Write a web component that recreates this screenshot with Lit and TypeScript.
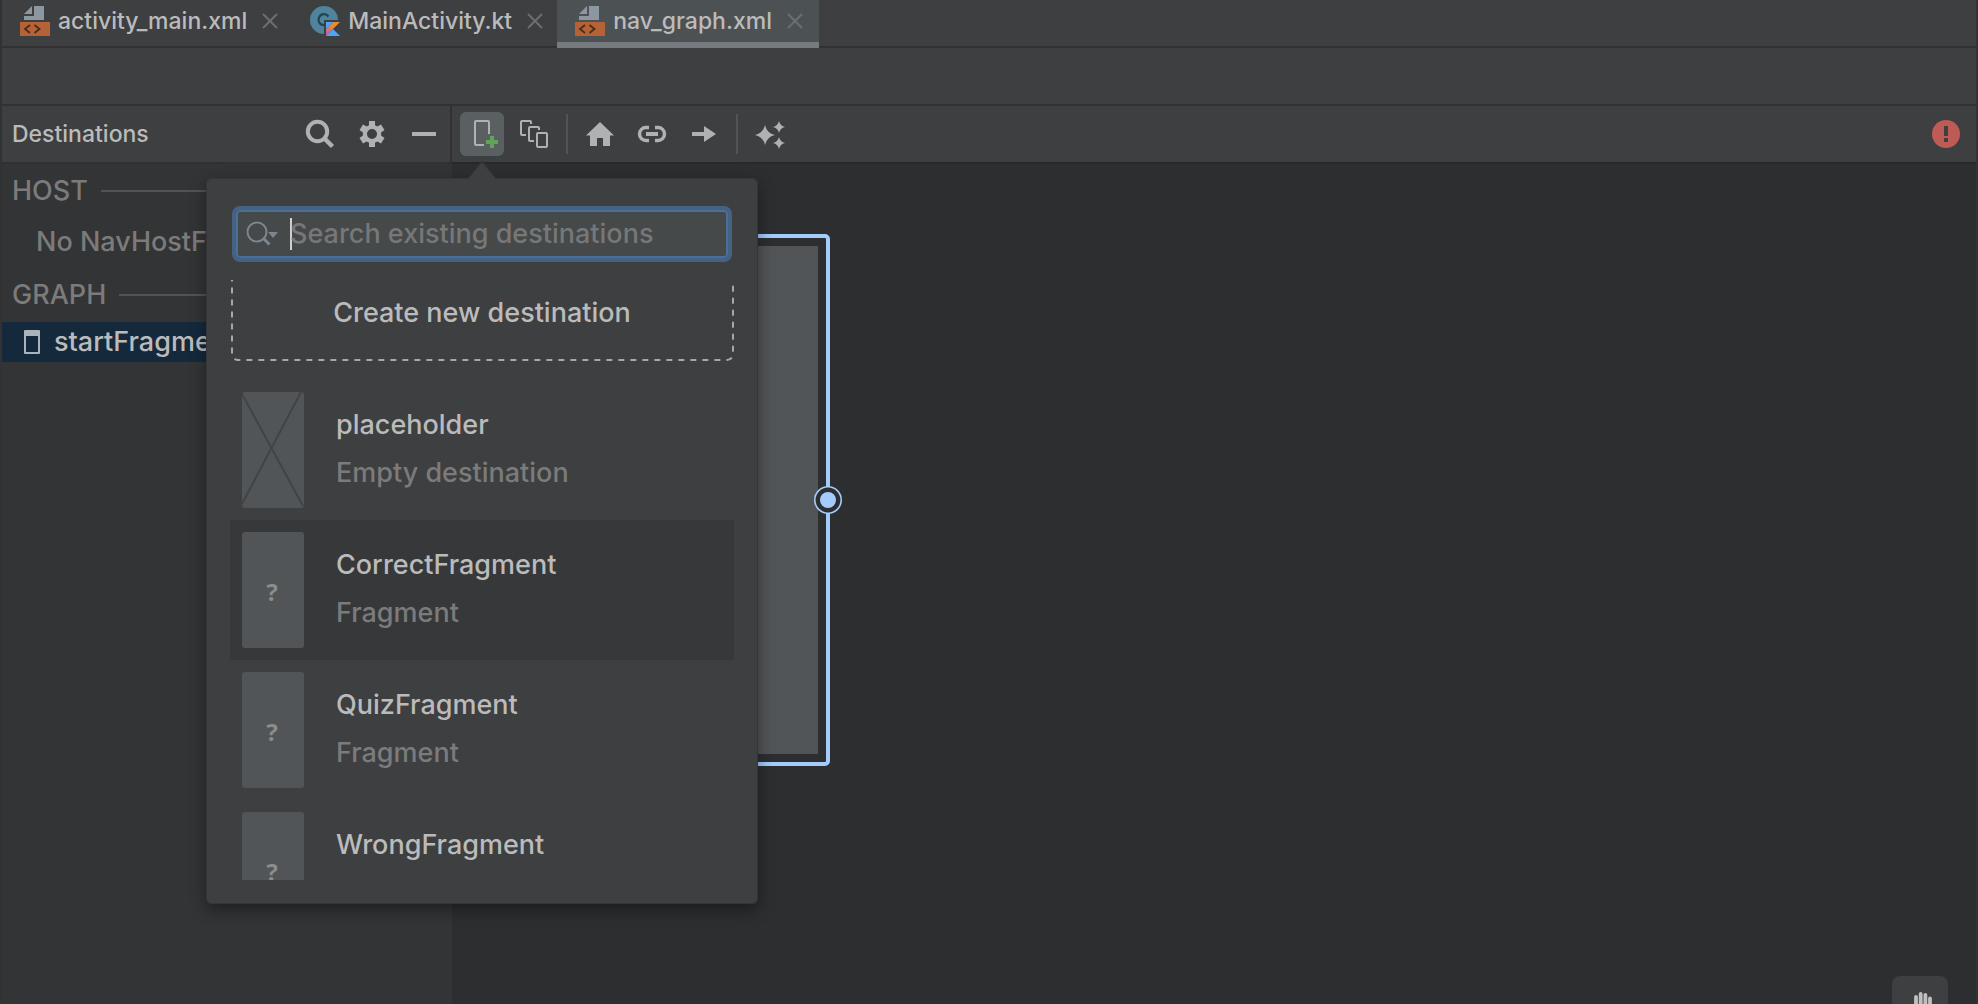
import { LitElement, html, svg, css, type TemplateResult } from "lit";
import { customElement, property } from "lit/decorators.js";
import { classMap } from "lit/directives/class-map.js";

type Tab = { name: string; kind: "xml" | "kotlin"; active?: boolean };
type Destination = { name: string; type: string; empty?: boolean; hovered?: boolean };

const tabs: Tab[] = [
  { name: "activity_main.xml", kind: "xml" },
  { name: "MainActivity.kt", kind: "kotlin" },
  { name: "nav_graph.xml", kind: "xml", active: true },
];

const destinations: Destination[] = [
  { name: "placeholder", type: "Empty destination", empty: true },
  { name: "CorrectFragment", type: "Fragment", hovered: true },
  { name: "QuizFragment", type: "Fragment" },
  { name: "WrongFragment", type: "Fragment" },
];

const glyphs: Record<string, TemplateResult> = {
  search: svg`<circle cx="13.5" cy="13.5" r="9.7" fill="none" stroke="currentColor" stroke-width="4"/>
    <path d="M20 20l8.500 8.500" stroke="currentColor" stroke-width="4.500" fill="none"/>`,
  gear: svg`<path fill="currentColor" fill-rule="evenodd" d="M13 3h6v4.200l2.400 1.400 3.600-2.100 3.500 5.600-3.400 2.300v3.200l3.400 2.300-3.500 5.600-3.600-2.100-2.400 1.400V29h-6v-4.200l-2.400-1.400L7 25.500l-3.500-5.600 3.400-2.300v-3.200l-3.400-2.300L7 6.500l3.600 2.100L13 7.200zM16 11a5 5 0 1 0 0 10 5 5 0 0 0 0-10z"/>`,
  minus: svg`<path fill="currentColor" d="M4 14h24v4H4z"/>`,
  add: svg`<path d="M18 27H10a1 1 0 0 1-1-1V4a1 1 0 0 1 1-1h12a1 1 0 0 1 1 1v12" fill="none" stroke="currentColor" stroke-width="2"/>
    <path d="M24 18h4v4h4v4h-4v4h-4v-4h-4v-4h4z" fill="#62a35b"/>`,
  stack: svg`<g fill="none" stroke="currentColor" stroke-width="2">
    <path d="M8 17H4a1 1 0 0 1-1-1V4a1 1 0 0 1 1-1h8a1 1 0 0 1 1 1v2"/>
    <path d="M16 23h-4a1 1 0 0 1-1-1V10a1 1 0 0 1 1-1h8a1 1 0 0 1 1 1v2"/>
    <rect x="19" y="15" width="10" height="14" rx="1"/></g>`,
  home: svg`<path fill="currentColor" d="M16 4l14 13.500h-4V28h-7v-8h-6v8H6V17.500H2z"/>`,
  link: svg`<path d="M13 9.500H10a6.500 6.500 0 0 0 0 13h3M19 9.500h3a6.500 6.500 0 0 1 0 13h-3" fill="none" stroke="currentColor" stroke-width="3.400"/>
    <path d="M10 14h12v4H10z" fill="currentColor"/>`,
  arrow: svg`<path fill="currentColor" d="M4 14h12V8l12 8-12 8v-6H4z"/>`,
  sparkle: svg`<path fill="currentColor" d="M11 7q1.800 8.200 10 10-8.200 1.800-10 10-1.800-8.200-10-10 8.200-1.800 10-10zM25 3q1.200 4.800 6 6-4.800 1.200-6 6-1.200-4.800-6-6 4.800-1.200 6-6zM25 19q1.200 4.800 6 6-4.800 1.200-6 6-1.200-4.800-6-6 4.800-1.200 6-6z"/>`,
};

const icon = (name: string) =>
  html`<svg class="icon" width="32" height="32" viewBox="0 0 32 32" aria-hidden="true">${glyphs[name]}</svg>`;

const reset = css`
  * { box-sizing: border-box; }
  button, input { font: inherit; color: inherit; border: 0; margin: 0; padding: 0; background: none; }
  svg { display: block; flex: none; }
`;

@customElement("editor-tabs")
class EditorTabs extends LitElement {
  static styles = [reset, css`
    :host { display: block; }
    .tabs { display: flex; height: 48px; border-bottom: 2px solid #323232; }
    .tab { display: flex; align-items: center; height: 48px; padding: 0 14px 6px 18px; font-size: 23px; line-height: 28px; }
    .tab.active { background: #4c5154; border-bottom: 6px solid #757b7f; padding-bottom: 0; padding-right: 16px; }
    .title { color: #bbbbbb; text-decoration: none; margin: 0 15px 0 8px; }
    .close { width: 16px; height: 16px; color: #6a6f72; }
  `];

  private fileIcon(kind: Tab["kind"]) {
    if (kind === "xml") {
      return html`<svg width="30" height="30" viewBox="0 0 30 30" aria-hidden="true">
        <path d="M4 8l8-8v8zM14 0h10v14H4v-4h10z" fill="#8d979f"/>
        <path d="M0 16h30v14H0z" fill="#b56336"/>
        <path d="M10 19l-5 4 5 4M14.500 19l5 4-5 4" fill="none" stroke="#4b2b1c" stroke-width="1.800"/>
      </svg>`;
    }
    return html`<svg width="30" height="30" viewBox="0 0 30 30" aria-hidden="true">
      <defs><linearGradient id="k" gradientUnits="userSpaceOnUse" x1="30" y1="16" x2="16" y2="30">
        <stop offset="0.400" stop-color="#ee8a2d"/><stop offset="1" stop-color="#b45bc5"/>
      </linearGradient></defs>
      <path d="M14 28A14 14 0 1 1 28 14H14z" fill="#4f849c"/>
      <path d="M18.500 10.500A5.500 5.500 0 1 0 14 19.200" fill="none" stroke="#25424f" stroke-width="2.200"/>
      <path d="M23 16h7L16 30v-7z" fill="url(#k)"/>
      <path d="M16 16h7l-7 7z" fill="#4ba6f5"/>
      <path d="M16 30l7-7 7 7z" fill="#4ba6f5"/>
    </svg>`;
  }

  render() {
    return html`<nav class="tabs" aria-label="Open files">
      ${tabs.map((t) => html`<div class=${classMap({ tab: true, active: !!t.active })}>
        ${this.fileIcon(t.kind)}
        <a class="title" href="#${t.name}">${t.name}</a>
        <button class="close" aria-label="Close ${t.name}">
          <svg width="16" height="16" viewBox="0 0 16 16"><path d="M1 1l14 14M15 1L1 15" stroke="currentColor" stroke-width="2"/></svg>
        </button>
      </div>`)}
    </nav>`;
  }
}

@customElement("destination-popup")
class DestinationPopup extends LitElement {
  static styles = [reset, css`
    :host { display: block; }
    .popup {
      position: relative; width: 552px; padding: 28px 24px 24px; background: #3e3f41;
      border-radius: 6px; font-size: 27px; line-height: 32px;
      box-shadow: inset 0 0 0 1px #353638, 0 6px 16px rgba(0, 0, 0, 0.4);
    }
    .arrow { position: absolute; left: 262px; top: -17px; }
    .search {
      display: flex; align-items: center; height: 56px; margin: 0 2px; padding: 0 8px 0 9px;
      background: #45494a; border: 4px solid #466283; border-radius: 8px;
      box-shadow: inset 0 0 0 2px #4b6e9a;
    }
    .field { display: flex; flex: 1; align-items: center; margin-left: 11px; }
    .caret { width: 2px; height: 32px; margin-right: -2px; background: #d0d0d0; }
    .input { flex: 1; min-width: 0; outline: none; caret-color: transparent; }
    .input::placeholder { color: #777777; opacity: 1; }
    .list { height: 600px; margin-top: 18px; overflow: hidden; }
    .create { display: grid; width: 100%; height: 120px; margin-top: -20px; }
    .create > * { grid-area: 1 / 1; }
    .outline { width: 100%; height: 104px; }
    .outline rect { x: 2px; y: 2px; width: calc(100% - 3px); height: 98px; }
    .create span { align-self: center; padding-bottom: 14px; color: #bbbbbb; }
    .item { display: flex; align-items: flex-start; width: 100%; height: 140px; padding: 12px; gap: 32px; text-align: left; }
    .item.hovered { background: #37383a; }
    .thumb { display: grid; place-items: center; width: 62px; height: 116px; border-radius: 3px; background: #515557; color: #8a8c8e; overflow: hidden; }
    .thumb.unknown { padding-top: 4px; padding-right: 2px; font: 700 24px/28px "Noto Sans", sans-serif; }
    .text { display: grid; gap: 16px; padding-top: 17px; }
    .name { color: #bbbbbb; }
    .type { color: #7b7b7b; }
  `];

  render() {
    return html`<section class="popup" aria-label="Add destination">
      <svg class="arrow" width="28" height="19" viewBox="0 0 28 19" aria-hidden="true">
        <path d="M0 18L14 1l14 17v1H0z" fill="#3e3f41"/>
        <path d="M0 17.500L14 0l14 17.500" fill="none" stroke="#333436"/>
      </svg>
      <label class="search">
        <svg width="34" height="28" viewBox="0 0 34 28" aria-hidden="true">
          <circle cx="12" cy="12" r="9.500" fill="none" stroke="#7c868e" stroke-width="2"/>
          <path d="M18 18l6.500 6.500" stroke="#7c868e" stroke-width="3"/>
          <path d="M23 12h10l-5 6z" fill="#7c868e"/>
        </svg>
        <span class="field">
          <span class="caret"></span>
          <input class="input" type="text" placeholder="Search existing destinations" aria-label="Search existing destinations">
        </span>
      </label>
      <div class="list">
        <button class="create">
          <svg class="outline" aria-hidden="true">
            <rect rx="6" fill="none" stroke="#a6a7a8" stroke-width="2" stroke-dasharray="6 6"/>
          </svg>
          <span>Create new destination</span>
        </button>
        ${destinations.map((d) => html`<button class=${classMap({ item: true, hovered: !!d.hovered })}>
          ${d.empty
            ? html`<span class="thumb"><svg width="62" height="116" viewBox="0 0 62 116" aria-hidden="true">
                <path d="M0 2l61 112M59 0L0 112" stroke="#414446" stroke-width="2"/></svg></span>`
            : html`<span class="thumb unknown">?</span>`}
          <span class="text"><span class="name">${d.name}</span><span class="type">${d.type}</span></span>
        </button>`)}
      </div>
    </section>`;
  }
}

@customElement("tool-button")
class ToolButton extends LitElement {
  @property() icon = "";
  @property() label = "";
  @property({ type: Boolean }) pressed = false;

  static styles = [reset, css`
    :host { display: block; color: #afb1b3; }
    .tool { display: grid; place-items: center; width: 44px; height: 44px; border-radius: 6px; }
    .tool.pressed { background: #5a5f62; }
  `];

  render() {
    return html`<button class=${classMap({ tool: true, pressed: this.pressed })} aria-label=${this.label}>${icon(this.icon)}</button>`;
  }
}

@customElement("app-root")
class AppRoot extends LitElement {
  static styles = [reset, css`
    :host { display: block; font-family: Inter, "Open Sans", sans-serif; font-weight: 500; color: #bbbbbb; }
    .window {
      display: grid; grid-template-rows: auto 58px 1fr; height: 100vh; overflow: hidden; position: relative;
      background: #3e3f41; border: solid #323232; border-width: 0 2px;
    }
    .blank { border-bottom: 2px solid #323232; }
    .workspace { display: grid; grid-template-columns: 450px 1fr; min-height: 0; }
    .sidebar, .editor { display: flex; flex-direction: column; min-width: 0; min-height: 0; }
    .sidebar { background: #333435; }
    .bar { display: flex; align-items: center; gap: 8px; height: 58px; background: #3e3f41; border-bottom: 2px solid #303132; }
    .sidebar .bar { padding: 0 4px 0 10px; border-right: 2px solid #323232; }
    .bar h2 { flex: 1; margin: 0; font-size: 23px; line-height: 28px; font-weight: 500; }
    .editor .bar { padding: 0 16px 0 8px; border-bottom-color: #29292b; }
    .separator { width: 2px; height: 40px; margin: 0 2px; background: #515355; }
    .anchor { position: relative; z-index: 2; }
    .anchor destination-popup { position: absolute; left: -254px; top: 66px; }
    .error { margin-left: auto; }
    .tree { font-size: 27px; line-height: 32px; color: #7b7b7b; padding-top: 10px; }
    .group { display: flex; align-items: center; gap: 13px; margin: 0; padding-left: 10px; height: 34px; font: inherit; }
    .group::after { content: ""; flex: 1; height: 2px; background: #515355; }
    .none { margin: 0; padding: 18px 0 20px 34px; white-space: nowrap; }
    .node { display: flex; align-items: center; gap: 14px; width: 100%; height: 40px; margin-top: 10px; padding-left: 22px; background: #15293d; color: #bbbbbb; }
    .canvas { position: relative; flex: 1; background: #2d2e30; overflow: hidden; }
    .fragment { position: absolute; left: 98px; top: 70px; width: 280px; height: 532px; padding: 8px; border: 4px solid #a4cbfb; border-radius: 5px; }
    .screen { height: 100%; background: #515557; }
    .handle { position: absolute; right: -16px; top: 248px; }
    .pan { display: grid; place-items: start; position: absolute; right: 28px; bottom: -28px; width: 56px; height: 56px; padding: 9px 0 0 16px; border-radius: 8px; background: #3e3f41; color: #c0c0c0; }
  `];

  render() {
    return html`<main class="window">
      <editor-tabs></editor-tabs>
      <div class="blank"></div>
      <div class="workspace">
        <aside class="sidebar">
          <header class="bar">
            <h2>Destinations</h2>
            <tool-button icon="search" label="Search"></tool-button>
            <tool-button icon="gear" label="Settings"></tool-button>
            <tool-button icon="minus" label="Hide"></tool-button>
          </header>
          <div class="tree">
            <h3 class="group">HOST</h3>
            <p class="none">No NavHostFragments found</p>
            <h3 class="group">GRAPH</h3>
            <button class="node">
              <svg width="16" height="24" viewBox="0 0 16 24" aria-hidden="true">
                <path fill="#a9b4bb" fill-rule="evenodd" d="M1 0h14a1 1 0 0 1 1 1v22a1 1 0 0 1-1 1H1a1 1 0 0 1-1-1V1a1 1 0 0 1 1-1zM2 6v16h12V6z"/>
              </svg>
              <span>startFragment</span>
            </button>
          </div>
        </aside>
        <section class="editor">
          <div class="bar" role="toolbar" aria-label="Navigation editor">
            <div class="anchor">
              <tool-button icon="add" label="New destination" pressed></tool-button>
              <destination-popup></destination-popup>
            </div>
            <tool-button icon="stack" label="Nested graph"></tool-button>
            <span class="separator"></span>
            <tool-button icon="home" label="Assign start destination"></tool-button>
            <tool-button icon="link" label="Create deep link"></tool-button>
            <tool-button icon="arrow" label="Add action"></tool-button>
            <span class="separator"></span>
            <tool-button icon="sparkle" label="Auto arrange"></tool-button>
            <button class="error" aria-label="Show errors">
              <svg width="28" height="28" viewBox="0 0 28 28"><circle cx="14" cy="14" r="14" fill="#be5b55"/>
                <path d="M12 6h4v10h-4zM12 18h4v4h-4z" fill="#3e3f41"/></svg>
            </button>
          </div>
          <div class="canvas">
            <div class="fragment">
              <div class="screen"></div>
              <svg class="handle" width="28" height="28" viewBox="0 0 28 28" aria-hidden="true">
                <circle cx="14" cy="14" r="13.200" fill="#2d2e30" stroke="#a4cbfb" stroke-width="1.600"/>
                <circle cx="14" cy="14" r="8" fill="#a4cbfb"/>
              </svg>
            </div>
            <button class="pan" aria-label="Pan">
              <svg width="26" height="32" viewBox="0 0 26 32"><path fill="none" stroke="currentColor" stroke-width="3.800" stroke-linecap="round" d="M8 12v14M12.700 9v14M17.400 10v14M22 13.500v12"/>
                <path fill="currentColor" d="M6 20h18v6q-1 6-7 6h-4q-3 0-5-3l-7-9q3-2 5 1z"/></svg>
            </button>
          </div>
        </section>
      </div>
    </main>`;
  }
}
